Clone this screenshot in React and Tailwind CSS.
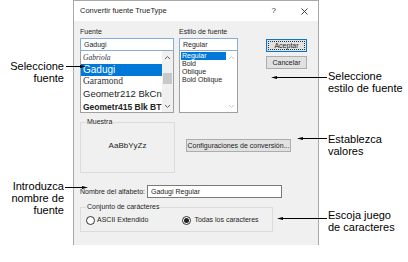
import React from "react";

function Radio({ checked }) {
  return (
    <span className="w-[9px] h-[9px] rounded-full border border-[#333] bg-white flex items-center justify-center shrink-0">
      {checked && <span className="w-[5px] h-[5px] rounded-full bg-[#222]" />}
    </span>
  );
}

function Chevron({ up, color }) {
  return (
    <svg width="7" height="5" viewBox="0 0 7 5">
      <path d={up ? "M1 4 L3.5 1.5 L6 4" : "M1 1 L3.5 3.5 L6 1"} fill="none" stroke={color} strokeWidth="1" />
    </svg>
  );
}

export default function App() {
  return (
    <div className="w-[408px] h-[262px] bg-white flex relative font-['Liberation_Sans',Arial,sans-serif] text-black overflow-hidden">
      {/* left annotations */}
      <div className="w-[73px] shrink-0 flex flex-col items-end pr-[9px] pt-[60px] text-[11px] leading-[12px] text-right">
        <div>Seleccione<br />fuente</div>
        <div className="mt-[96px]">Introduzca<br />nombre de<br />fuente</div>
      </div>

      {/* dialog */}
      <div className="w-[246px] h-[245px] shrink-0 border-x border-t border-[#a9a9a9] flex flex-col text-[7px] leading-[8px] text-[#1e1e1e]">
        <div className="h-[20px] bg-white flex items-center pl-[6px] shrink-0">
          <span className="text-[7.5px]">Convertir fuente TrueType</span>
          <span className="ml-auto text-[8px] text-[#333]">?</span>
          <svg className="ml-[25px] mr-[10px]" width="7" height="7" viewBox="0 0 7 7">
            <path d="M0.5 0.5 L6.5 6.5 M6.5 0.5 L0.5 6.5" stroke="#333" strokeWidth="0.9" />
          </svg>
        </div>
        <div className="flex-1 bg-[#f0f0f0] pl-[6px] pt-[7px] flex flex-col">
          {/* top row */}
          <div className="flex">
            <div className="w-[94px] flex flex-col">
              <div className="h-[10px]">Fuente</div>
              <div className="h-[13px] border border-[#86acd8] bg-white flex items-center pl-[3px]">Gadugi</div>
              <div className="h-[62px] border border-[#a0a0a0] border-t-0 bg-white flex overflow-hidden">
                <div className="flex-1 flex flex-col overflow-hidden">
                  <div className="h-[13px] shrink-0 flex items-center pl-[2px] font-['Liberation_Serif',serif] italic text-[7.5px] leading-[13px] text-[#333]">Gabriola</div>
                  <div className="h-[12px] shrink-0 flex items-center pl-[2px] bg-[#0078d7] text-white text-[10px] leading-[12px]">Gadugi</div>
                  <div className="h-[11px] shrink-0 flex items-center pl-[2px] font-['Liberation_Serif',serif] text-[9.5px] leading-[11px] text-[#333]">Garamond</div>
                  <div className="h-[14px] shrink-0 flex items-center pl-[2px] text-[9.5px] leading-[14px] text-[#222]">Geometr212 BkCn</div>
                  <div className="h-[12px] shrink-0 flex items-center pl-[2px] font-bold text-[8.5px] leading-[12px] text-[#222]">Geometr415 Blk BT</div>
                </div>
                <div className="w-[11px] bg-[#f0f0f0] flex flex-col items-center">
                  <div className="h-[12px] flex items-center"><Chevron up color="#606060" /></div>
                  <div className="mt-[10px] w-[9px] h-[11px] bg-[#c8c8c8]" />
                  <div className="mt-auto h-[12px] flex items-center"><Chevron color="#606060" /></div>
                </div>
              </div>
            </div>
            <div className="w-[59px] ml-[5px] flex flex-col">
              <div className="h-[10px]">Estilo de fuente</div>
              <div className="h-[13px] border border-[#86acd8] bg-white flex items-center pl-[3px]">Regular</div>
              <div className="h-[62px] border border-[#a0a0a0] border-t-0 bg-white flex overflow-hidden">
                <div className="flex-1 flex flex-col pt-[1px] pl-[1px]">
                  <div className="h-[8px] flex items-center pl-[1px] bg-[#0078d7] text-white">Regular</div>
                  <div className="h-[8px] flex items-center pl-[1px]">Bold</div>
                  <div className="h-[8px] flex items-center pl-[1px]">Oblique</div>
                  <div className="h-[8px] flex items-center pl-[1px]">Bold Oblique</div>
                </div>
                <div className="w-[11px] flex flex-col items-center">
                  <div className="h-[12px] flex items-center"><Chevron up color="#c8c8c8" /></div>
                  <div className="mt-auto h-[12px] flex items-center"><Chevron color="#c8c8c8" /></div>
                </div>
              </div>
            </div>
            <div className="w-[41px] ml-[28px] flex flex-col pt-[11px] gap-[4px]">
              <div className="h-[13px] border border-[#0078d7] bg-[#e1e1e1] p-[1px]">
                <div className="h-full border border-dotted border-[#333] flex items-center justify-center">Aceptar</div>
              </div>
              <div className="h-[13px] border border-[#adadad] bg-[#e1e1e1] flex items-center justify-center">Cancelar</div>
            </div>
          </div>

          {/* muestra row */}
          <div className="flex mt-[5px]">
            <fieldset className="w-[95px] border border-[#dcdcdc]">
              <legend className="ml-[5px] px-[1px]">Muestra</legend>
              <div className="h-[46px] flex items-center justify-center pb-[6px] text-[8px]">AaBbYyZz</div>
            </fieldset>
            <div className="ml-[11px] mt-[21px] w-[105px] h-[13px] border border-[#adadad] bg-[#e1e1e1] flex items-center justify-center">
              Configuraciones de conversión...
            </div>
          </div>

          {/* nombre row */}
          <div className="flex items-center mt-[12px]">
            <span className="w-[67px]">Nombre del alfabeto:</span>
            <div className="w-[135px] h-[13px] border border-[#7a7a7a] bg-white flex items-center pl-[3px]">Gadugi Regular</div>
          </div>

          {/* conjunto */}
          <fieldset className="mt-[5px] w-[193px] border border-[#dcdcdc]">
            <legend className="ml-[5px] px-[1px]">Conjunto de carácteres</legend>
            <div className="h-[20px] flex items-center pl-[5px] pb-[2px]">
              <div className="flex items-center gap-[2px]">
                <Radio />
                <span>ASCII Extendido</span>
              </div>
              <div className="flex items-center gap-[3px] ml-[34px]">
                <Radio checked />
                <span>Todas los caracteres</span>
              </div>
            </div>
          </fieldset>
        </div>
      </div>

      {/* right annotations */}
      <div className="flex-1 pl-[9px] pt-[70px] text-[11px] leading-[12px] whitespace-nowrap">
        <div>Seleccione<br />estilo de fuente</div>
        <div className="mt-[39px]">Establezca<br />valores</div>
        <div className="mt-[52px]">Escoja juego<br />de caracteres</div>
      </div>

      {/* callout lines */}
      <svg className="absolute left-0 top-0 pointer-events-none" width="408" height="262" viewBox="0 0 408 262">
        <g stroke="#000" strokeWidth="1">
          <line x1="66" y1="66.5" x2="82" y2="66.5" />
          <line x1="274" y1="77.5" x2="327" y2="77.5" />
          <line x1="300" y1="138.5" x2="327" y2="138.5" />
          <line x1="65" y1="187.5" x2="84" y2="187.5" />
          <line x1="280" y1="218.5" x2="327" y2="218.5" />
        </g>
        <g fill="#000">
          <path d="M86 66.5 L80 65 L80 68 Z" />
          <path d="M271 77.5 L277 76 L277 79 Z" />
          <path d="M297 138.5 L303 137 L303 140 Z" />
          <path d="M88 187.5 L82 186 L82 189 Z" />
          <path d="M277 218.5 L283 217 L283 220 Z" />
        </g>
      </svg>
    </div>
  );
}
